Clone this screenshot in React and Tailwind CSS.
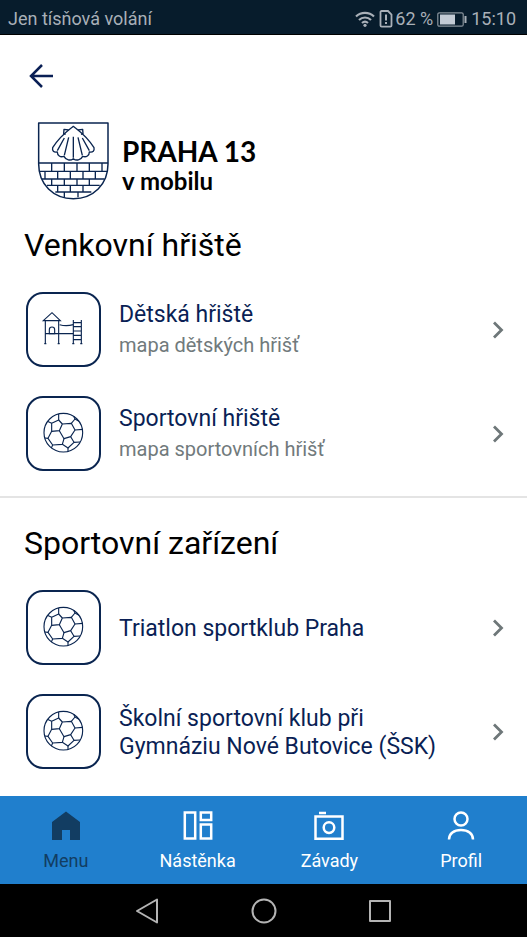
import React, { useState } from 'react';

const sections = [
    {
        title: 'Venkovní hřiště',
        items: [
            { name: 'Dětská hřiště', note: 'mapa dětských hřišť', icon: 'playground' },
            { name: 'Sportovní hřiště', note: 'mapa sportovních hřišť', icon: 'ball' },
        ],
    },
    {
        title: 'Sportovní zařízení',
        items: [
            { name: 'Triatlon sportklub Praha', icon: 'ball' },
            { name: 'Školní sportovní klub při Gymnáziu Nové Butovice (ŠSK)', icon: 'ball' },
        ],
    },
];

const StatusBar = () => (
    <div className='flex h-[35px] items-center border-b border-black bg-[#071c2c] pt-1 pr-[11px] pl-2 text-lg leading-5 text-[#a9b0b8]'>
        <span className='flex-1'>Jen tísňová volání</span>
        <svg viewBox="0 0 20 16" className='h-4 w-5' fill="none" stroke="currentColor" strokeWidth="2.2">
            <path d="M1 5.5a13 13 0 0 1 18 0M4 9a8.5 8.5 0 0 1 12 0M7 12a4.5 4.5 0 0 1 6 0" />
            <circle cx="10" cy="14.3" r="1.6" fill="currentColor" stroke="none" />
        </svg>
        <svg viewBox="0 0 14 18" className='ml-1 h-[18px] w-3.5' fill="none" stroke="currentColor" strokeWidth="1.8">
            <path d="M2.5 1h6.5l3.5 3.5v11a1.2 1.2 0 0 1-1.2 1.2H2.7a1.2 1.2 0 0 1-1.2-1.2V2a1 1 0 0 1 1-1z" />
            <path d="M7 4.5v6M7 12v2" strokeWidth="2" />
        </svg>
        <span className='ml-0.5'>62 %</span>
        <svg viewBox="0 0 30 15" className='ml-1 h-[15px] w-[30px]' fill="none" stroke="currentColor">
            <rect x="0.8" y="0.8" width="25.4" height="13.4" rx="1.5" strokeWidth="1.2" opacity="0.8" />
            <rect x="3" y="2.5" width="15" height="10" fill="#c3cbd5" stroke="none" />
            <path d="M28.5 4v7" strokeWidth="2" />
        </svg>
        <span className='ml-1'>15:10</span>
    </div>
);

const Crest = () => (
    <svg viewBox="51 33 219 237" className='h-[79px] w-[73px]' fill="none" stroke="#0a2550" strokeWidth="4.5" strokeLinejoin="round">
        <path d="M56 39H264V162C264 223 220 266 160 266S56 223 56 162Z" />
        <g strokeWidth="4">
            <path d="M56 159H264M57 184H263M66 207H254M81 226H239M106 246H214" />
            <path d="M95 159v25M133 159v25M171 159v25M208 159v25M246 159v25" />
            <path d="M75 184v23M113 184v23M151 184v23M189 184v23M226 184v23" />
            <path d="M95 207v19M133 207v19M171 207v19M208 207v19" />
            <path d="M113 226v20M151 226v20M189 226v20M133 246v16M174 246v16" />
        </g>
        <g strokeWidth="4">
            <path d="M160 49C144 62 122 75 98 113C96 123 101 128 112 126C112 137 121 143 132 139C138 151 151 153 160 146C169 153 182 151 188 139C199 143 208 137 208 126C219 128 224 123 222 113C198 75 176 62 160 49Z" />
            <path d="M146 60L132 58L131 71L137 73M174 60L188 58L189 71L183 73" />
            <path d="M133 84L112 122M146 82L133 136M160 80V143M174 82L187 136M187 84L208 122" />
        </g>
    </svg>
);

const PlaygroundIcon = () => (
    <svg viewBox="24 27 213 213" className='h-full w-full' fill="none" stroke="#0a2550" strokeWidth="3.4">
        <path d="M70 107L96 83L121 107Z" />
        <path d="M76 107V177M116 107V177M76 146H160M119 119Q138 125 160 119" />
        <path d="M88 146V134a8 8 0 0 1 16 0V146Z" />
        <path d="M160 105V177M184 105V177M160 113H184M160 125H184M160 138H184M160 151H184M160 164H184" />
        <path d="M73 176h6M113 176h6M157 176h6M181 176h6" />
    </svg>
);

const BallIcon = () => (
    <svg viewBox="24 24 213 213" className='h-full w-full' fill="none" stroke="#0a2550" strokeWidth="3.4" strokeLinejoin="round">
        <circle cx="130" cy="128" r="58" />
        <path d="M95 100L116 90L127 102L118 122L95 124Z" />
        <path d="M127 102L154 100L165 120L152 140L132 146L118 122" />
        <path d="M95 124L84 145L98 165L127 163L132 146" />
        <path d="M152 140L162 157L144 174L127 163" />
        <path d="M116 90V72M95 100L82 94M154 100L165 87L161 79M165 87L177 94M165 120L188 118M162 157L180 156M144 174V185M98 165L94 174M84 145L74 144" />
    </svg>
);

const icons = { playground: PlaygroundIcon, ball: BallIcon };

const Row = ({ item }) => {
    const Icon = icons[item.icon];
    return (
        <a href="#" className='flex items-center pt-[15px] pr-5 pb-3.5 pl-[26px]'>
            <span className='h-[75px] w-[75px] shrink-0 rounded-[17px] border-2 border-[#0a2550]'>
                <Icon />
            </span>
            <span className='ml-[18px] flex-1 pt-[3px] pr-8'>
                <span className='block text-[23px] leading-7 text-[#0a1f55]'>{item.name}</span>
                {item.note && <span className='block text-xl leading-8 text-[#717a7c]'>{item.note}</span>}
            </span>
            <svg viewBox="0 0 18 18" className='h-[18px] w-[18px] shrink-0' fill="none" stroke="#6e7779" strokeWidth="2.8">
                <path d="M5 1.5l7.5 7.5L5 16.5" />
            </svg>
        </a>
    );
};

const tabs = [
    {
        id: 'menu',
        label: 'Menu',
        icon: <path d="M1 29V11L15 0.5L29 11V29H19V19H11V29Z" fill="currentColor" stroke="none" />,
    },
    {
        id: 'board',
        label: 'Nástěnka',
        icon: <path d="M1.8 1.6h10.4v26H1.8zM17.8 1.6h10.4V9H17.8zM17.8 13.5h10.4v14.1H17.8z" />,
    },
    {
        id: 'issues',
        label: 'Závady',
        icon: (
            <>
                <path d="M1.5 5.5h27v22.2h-27zM5 2h7" />
                <circle cx="15" cy="16.6" r="5.3" />
            </>
        ),
    },
    {
        id: 'profile',
        label: 'Profil',
        icon: (
            <>
                <circle cx="15" cy="8" r="6.5" />
                <path d="M3 28.5c0-6 5-9.5 12-9.5s12 3.5 12 9.5" />
            </>
        ),
    },
];

export default function App() {
    const [active, setActive] = useState('menu');

    return (
        <div className="flex min-h-screen flex-col bg-white font-['Roboto',sans-serif]">
            <StatusBar />

            <main className='flex-1'>
                <header className='pt-[25px]'>
                    <button type="button" aria-label="Zpět" className='ml-[25px] flex h-8 w-8 items-center justify-center'>
                        <svg viewBox="0 0 24 24" className='h-6 w-6' fill="none" stroke="#0a1f55" strokeWidth="2.5">
                            <path d="M24 12H2M13 1L2 12l11 11" />
                        </svg>
                    </button>
                    <div className='mt-[29px] flex items-center pl-[37px]'>
                        <Crest />
                        <h1 className="ml-3 pt-2 font-['Lato',sans-serif] font-bold text-black">
                            <span className='block text-[28px] leading-8'>PRAHA 13</span>
                            <span className='block text-2xl leading-7'>v mobilu</span>
                        </h1>
                    </div>
                </header>

                {sections.map((section) => (
                    <section key={section.title} className='border-b-2 border-[#e4e4e4] pt-[27px] pb-[11px] last:border-0 last:pb-0'>
                        <h2 className='px-6 text-[32px] leading-9 text-black'>{section.title}</h2>
                        <div className='pt-3.5'>
                            {section.items.map((item) => (
                                <Row key={item.name} item={item} />
                            ))}
                        </div>
                    </section>
                ))}
            </main>

            <nav className='grid h-[88px] grid-cols-4 bg-[#207fcd]'>
                {tabs.map((tab) => (
                    <button
                        key={tab.id}
                        type="button"
                        onClick={() => setActive(tab.id)}
                        className={`flex flex-col items-center pt-[15px] text-lg leading-6 ${active === tab.id ? 'text-[#123d62]' : 'text-white'}`}
                    >
                        <svg viewBox="0 0 30 30" className='mb-2 h-[30px] w-[30px]' fill="none" stroke="currentColor" strokeWidth="2.5">
                            {tab.icon}
                        </svg>
                        {tab.label}
                    </button>
                ))}
            </nav>

            <div className='flex h-[53px] items-center justify-center gap-[90px] bg-black'>
                <button type="button" aria-label="Zpět v systému">
                    <svg viewBox="0 0 26 26" className='h-[26px] w-[26px]' fill="none" stroke="#b4b4b4" strokeWidth="2" strokeLinejoin="round">
                        <path d="M2 13L22 1.5V24.5Z" />
                    </svg>
                </button>
                <button type="button" aria-label="Domů">
                    <svg viewBox="0 0 26 26" className='h-[26px] w-[26px]' fill="none" stroke="#b4b4b4" strokeWidth="2">
                        <circle cx="13" cy="13" r="11.5" />
                    </svg>
                </button>
                <button type="button" aria-label="Přehled">
                    <svg viewBox="0 0 26 26" className='h-[26px] w-[26px]' fill="none" stroke="#b4b4b4" strokeWidth="2" strokeLinejoin="round">
                        <rect x="3" y="3" width="20" height="20" />
                    </svg>
                </button>
            </div>
        </div>
    );
}
